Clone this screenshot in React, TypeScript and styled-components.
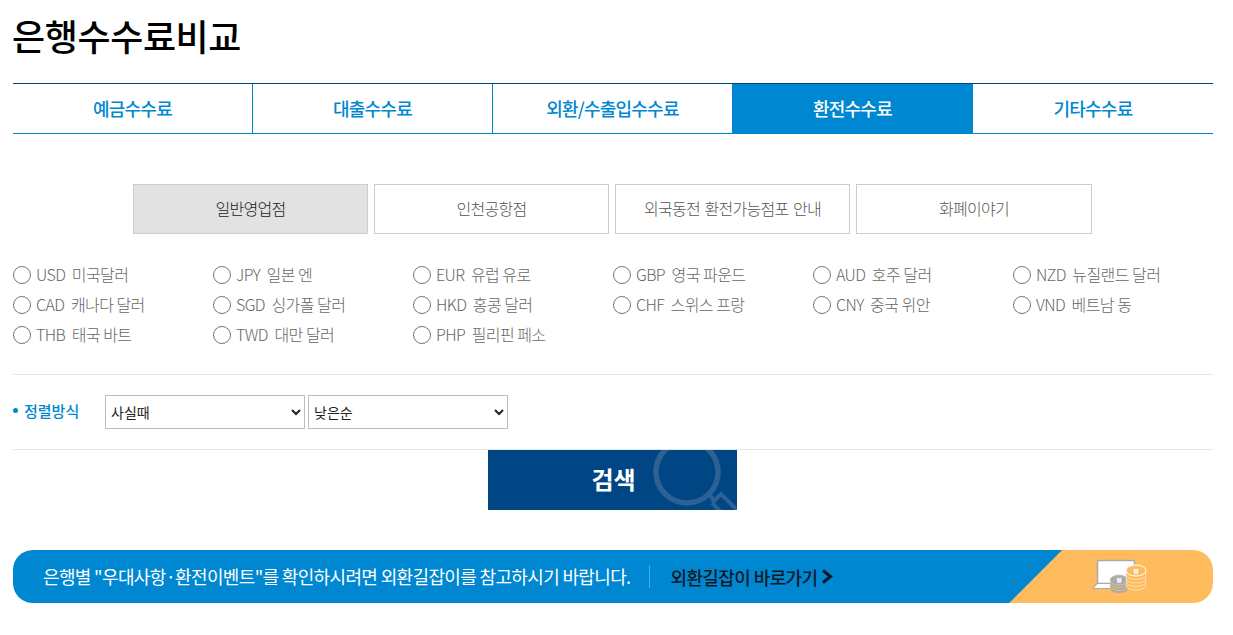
import React from 'react';
import styled, { createGlobalStyle } from 'styled-components';

const GlobalStyle = createGlobalStyle`
  html, body {
    margin: 0;
    padding: 0;
    background: #fff;
    font-family: "Noto Sans CJK KR", "Noto Sans", sans-serif;
  }
`;

const Page = styled.div`
  width: 1200px;
  padding: 0 20px 32px 13px;
`;

const Title = styled.h1`
  margin: 0 0 0 -1px;
  height: 83px;
  padding-top: 9px;
  box-sizing: border-box;
  font-size: 36px;
  line-height: 52px;
  font-weight: 500;
  letter-spacing: -0.4px;
  color: #000;
`;

const TabBar = styled.ul`
  display: grid;
  grid-template-columns: repeat(5, 240px);
  margin: 0;
  padding: 0;
  list-style: none;
  border-top: 1px solid #00467f;
  border-bottom: 1px solid #0087d1;
`;

const Tab = styled.li<{ $active?: boolean }>`
  height: 49px;
  line-height: 49px;
  text-align: center;
  font-size: 18px;
  font-weight: 500;
  letter-spacing: -0.8px;
  box-sizing: border-box;
  color: ${({ $active }) => ($active ? '#fff' : '#0087d1')};
  background: ${({ $active }) => ($active ? '#0087d1' : '#fff')};
  border-right: 1px solid #0087d1;
  &:last-child {
    border-right: 0;
  }
`;

const SubTabs = styled.div`
  display: flex;
  justify-content: center;
  gap: 6px;
  margin-top: 50px;
  padding-right: 1px;
`;

const SubTab = styled.div<{ $active?: boolean }>`
  width: 235px;
  height: 50px;
  box-sizing: border-box;
  line-height: 47px;
  text-align: center;
  font-size: 16px;
  font-weight: 300;
  letter-spacing: -0.7px;
  word-spacing: 1.5px;
  border: 1px solid #ccc;
  color: ${({ $active }) => ($active ? '#222' : '#555')};
  background: ${({ $active }) => ($active ? '#e2e2e2' : '#fff')};
  &:last-child {
    width: 236px;
  }
`;

const CurrencyGrid = styled.div`
  display: grid;
  grid-template-columns: repeat(6, 200px);
  grid-auto-rows: 30px;
  margin-top: 26px;
  padding-bottom: 24px;
  border-bottom: 1px solid #e6e6e6;
`;

const Currency = styled.label`
  display: flex;
  align-items: center;
`;

const CurrencyName = styled.span`
  margin-top: -2px;
  font-size: 16px;
  font-weight: 300;
  letter-spacing: -0.6px;
  word-spacing: 0.3px;
  color: #666;
  white-space: pre;
`;

const Radio = styled.span`
  width: 18px;
  height: 18px;
  box-sizing: border-box;
  margin-right: 5px;
  border: 1px solid #767676;
  border-radius: 50%;
  background: #fff;
`;

const SortRow = styled.div`
  display: flex;
  align-items: center;
  height: 74px;
  border-bottom: 1px solid #e6e6e6;
`;

const SortLabel = styled.div`
  display: flex;
  align-items: center;
  gap: 6px;
  width: 92px;
  margin-top: -3px;
  font-size: 15px;
  font-weight: 500;
  color: #0087d1;
  &::before {
    content: '';
    width: 5px;
    height: 5px;
    border-radius: 50%;
    background: #0087d1;
  }
`;

const SortSelect = styled.select`
  width: 200px;
  height: 34px;
  margin-right: 3px;
  padding: 0 1px;
  box-sizing: border-box;
  background: #fff;
  border: 1px solid #bdbdbd;
  border-radius: 0;
  font-family: inherit;
  font-size: 14px;
  color: #222;
`;

const SearchButton = styled.button`
  position: relative;
  display: block;
  width: 249px;
  height: 60px;
  margin: 0 0 0 475px;
  padding: 0 0 4px 2px;
  overflow: hidden;
  border: 0;
  background: #004684;
  font-family: inherit;
  font-size: 24px;
  font-weight: 700;
  color: #fff;
`;

const SearchMark = styled.svg`
  position: absolute;
  top: 0;
  left: 0;
`;

const Banner = styled.div`
  display: flex;
  align-items: center;
  height: 53px;
  margin-top: 40px;
  padding-left: 30px;
  overflow: hidden;
  border-radius: 20px;
  background: linear-gradient(135deg, #0087d1 741.5px, #ffbc5f 742.3px);
`;

const BannerText = styled.span`
  margin-top: -1px;
  font-size: 18px;
  letter-spacing: -0.65px;
  color: #fff;
`;

const BannerLink = styled.span`
  display: flex;
  align-items: center;
  gap: 3px;
  height: 23px;
  margin-left: 19px;
  padding-left: 20px;
  border-left: 1px solid #4aa8dd;
  font-size: 18px;
  font-weight: 500;
  letter-spacing: -0.6px;
  color: #0c1a26;
`;

const BannerArt = styled.div`
  display: flex;
  margin-left: auto;
  margin-right: 65px;
`;

const tabs = ['예금수수료', '대출수수료', '외환/수출입수수료', '환전수수료', '기타수수료'];
const subTabs = ['일반영업점', '인천공항점', '외국동전 환전가능점포 안내', '화폐이야기'];
const currencies = [
  ['USD', '미국달러'],
  ['JPY', '일본 엔'],
  ['EUR', '유럽 유로'],
  ['GBP', '영국 파운드'],
  ['AUD', '호주 달러'],
  ['NZD', '뉴질랜드 달러'],
  ['CAD', '캐나다 달러'],
  ['SGD', '싱가폴 달러'],
  ['HKD', '홍콩 달러'],
  ['CHF', '스위스 프랑'],
  ['CNY', '중국 위안'],
  ['VND', '베트남 동'],
  ['THB', '태국 바트'],
  ['TWD', '대만 달러'],
  ['PHP', '필리핀 페소'],
];

const CoinsIcon = () => (
  <svg width="56" height="36" viewBox="0 0 56 36" fill="none">
    <rect x="5.5" y="1.5" width="37" height="23" rx="1" fill="#fff" stroke="#aaa" strokeWidth="1.5" />
    <path d="M5 24.5 L0.5 29.5 H26 V24.5 Z" fill="#fff" stroke="#aaa" strokeWidth="1.2" />
    {[30, 27, 24].map((y) => (
      <ellipse key={y} cx="27" cy={y} rx="9" ry="4.5" fill="#aaa" stroke="#ffbc5f" strokeWidth="0.8" />
    ))}
    <ellipse cx="27" cy="21" rx="9" ry="5" fill="#aaa" stroke="#ccc" strokeWidth="0.8" />
    <text x="27" y="24" textAnchor="middle" fontSize="8" fontWeight="700" fill="#fff">₩</text>
    {[26, 22.5, 19, 15.5].map((y) => (
      <ellipse key={y} cx="44" cy={y} rx="10" ry="5" fill="#ffbc5f" stroke="#ffe2b8" strokeWidth="0.9" />
    ))}
    <ellipse cx="44" cy="11.5" rx="10" ry="5.5" fill="#ffbc5f" stroke="#fff" strokeWidth="1" />
    <text x="44" y="14.5" textAnchor="middle" fontSize="8" fontWeight="700" fill="#fff">₩</text>
  </svg>
);

const App: React.FC = () => {
  return (
    <Page>
      <GlobalStyle />
      <Title>은행수수료비교</Title>
      <TabBar>
        {tabs.map((tab, index) => (
          <Tab key={tab} $active={index === 3}>{tab}</Tab>
        ))}
      </TabBar>
      <SubTabs>
        {subTabs.map((tab, index) => (
          <SubTab key={tab} $active={index === 0}>{tab}</SubTab>
        ))}
      </SubTabs>
      <CurrencyGrid>
        {currencies.map(([code, name]) => (
          <Currency key={code}>
            <Radio />
            <CurrencyName>{code}  {name}</CurrencyName>
          </Currency>
        ))}
      </CurrencyGrid>
      <SortRow>
        <SortLabel>정렬방식</SortLabel>
        <SortSelect defaultValue="사실때">
          <option>사실때</option>
          <option>파실때</option>
        </SortSelect>
        <SortSelect defaultValue="낮은순">
          <option>낮은순</option>
          <option>높은순</option>
        </SortSelect>
      </SortRow>
      <SearchButton type="button">
        <SearchMark width="249" height="60" viewBox="0 0 249 60" fill="none">
          <circle cx="199" cy="22" r="31" stroke="#2b6194" strokeWidth="5.5" />
          <path d="M220 44 L226 50 M224 53 L233 44 L252 63 M224 53 L234 63" stroke="#2b6194" strokeWidth="4" />
        </SearchMark>
        검색
      </SearchButton>
      <Banner>
        <BannerText>은행별 "우대사항·환전이벤트"를 확인하시려면 외환길잡이를 참고하시기 바랍니다.</BannerText>
        <BannerLink>
          외환길잡이 바로가기
          <svg width="12" height="15" viewBox="0 0 12 15" fill="none">
            <path d="M2 1.5 L9.5 7.5 L2 13.5" stroke="#0c1a26" strokeWidth="3" />
          </svg>
        </BannerLink>
        <BannerArt>
          <CoinsIcon />
        </BannerArt>
      </Banner>
    </Page>
  );
};

export default App;
